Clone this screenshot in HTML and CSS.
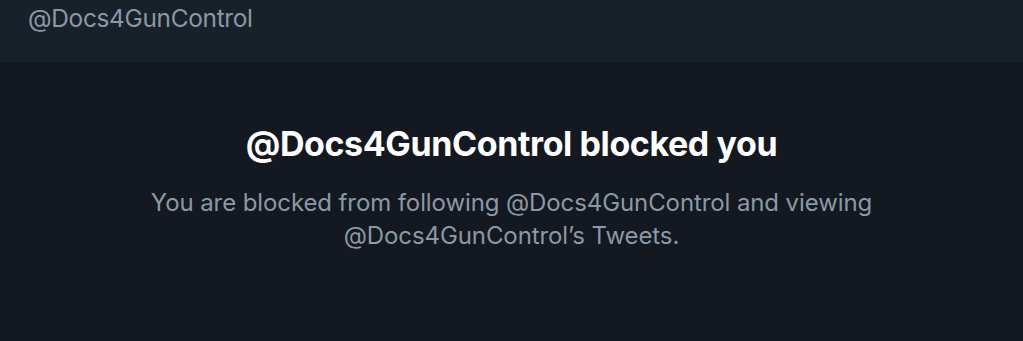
FILE: index.html
```html
<!DOCTYPE html>
<html lang="en">
<head>
    <meta charset="UTF-8">
    <title>Blocked</title>
    <link rel="stylesheet" href="styles.css">
</head>
<body>
    <header class="profile-bar">
        <span class="handle">@Docs4GunControl</span>
    </header>
    <main class="blocked">
        <h1>@Docs4GunControl blocked you</h1>
        <p>You are blocked from following @Docs4GunControl and viewing<br>@Docs4GunControl’s Tweets.</p>
    </main>
</body>
</html>
```

FILE: styles.css
```css
body {
    margin: 0;
    padding: 0;
    background-color: #131821;
    font-family: Inter, Roboto, "Liberation Sans", sans-serif;
    height: 341px;
    overflow: hidden;
}
.profile-bar {
    background-color: #18202a;
    height: 62px;
    padding: 0 28px;
    box-sizing: border-box;
}
.handle {
    display: block;
    color: #8b98a5;
    font-size: 24.4px;
    line-height: 36px;
    letter-spacing: -0.3px;
}
.blocked {
    text-align: center;
    padding-top: 60px;
}
.blocked h1 {
    margin: 0;
    color: #ffffff;
    font-size: 34px;
    font-weight: 700;
    line-height: 44px;
    letter-spacing: -0.4px;
}
.blocked p {
    margin: 20px 0 0;
    color: #8b98a5;
    font-size: 24px;
    line-height: 33px;
    letter-spacing: -0.1px;
}
```
